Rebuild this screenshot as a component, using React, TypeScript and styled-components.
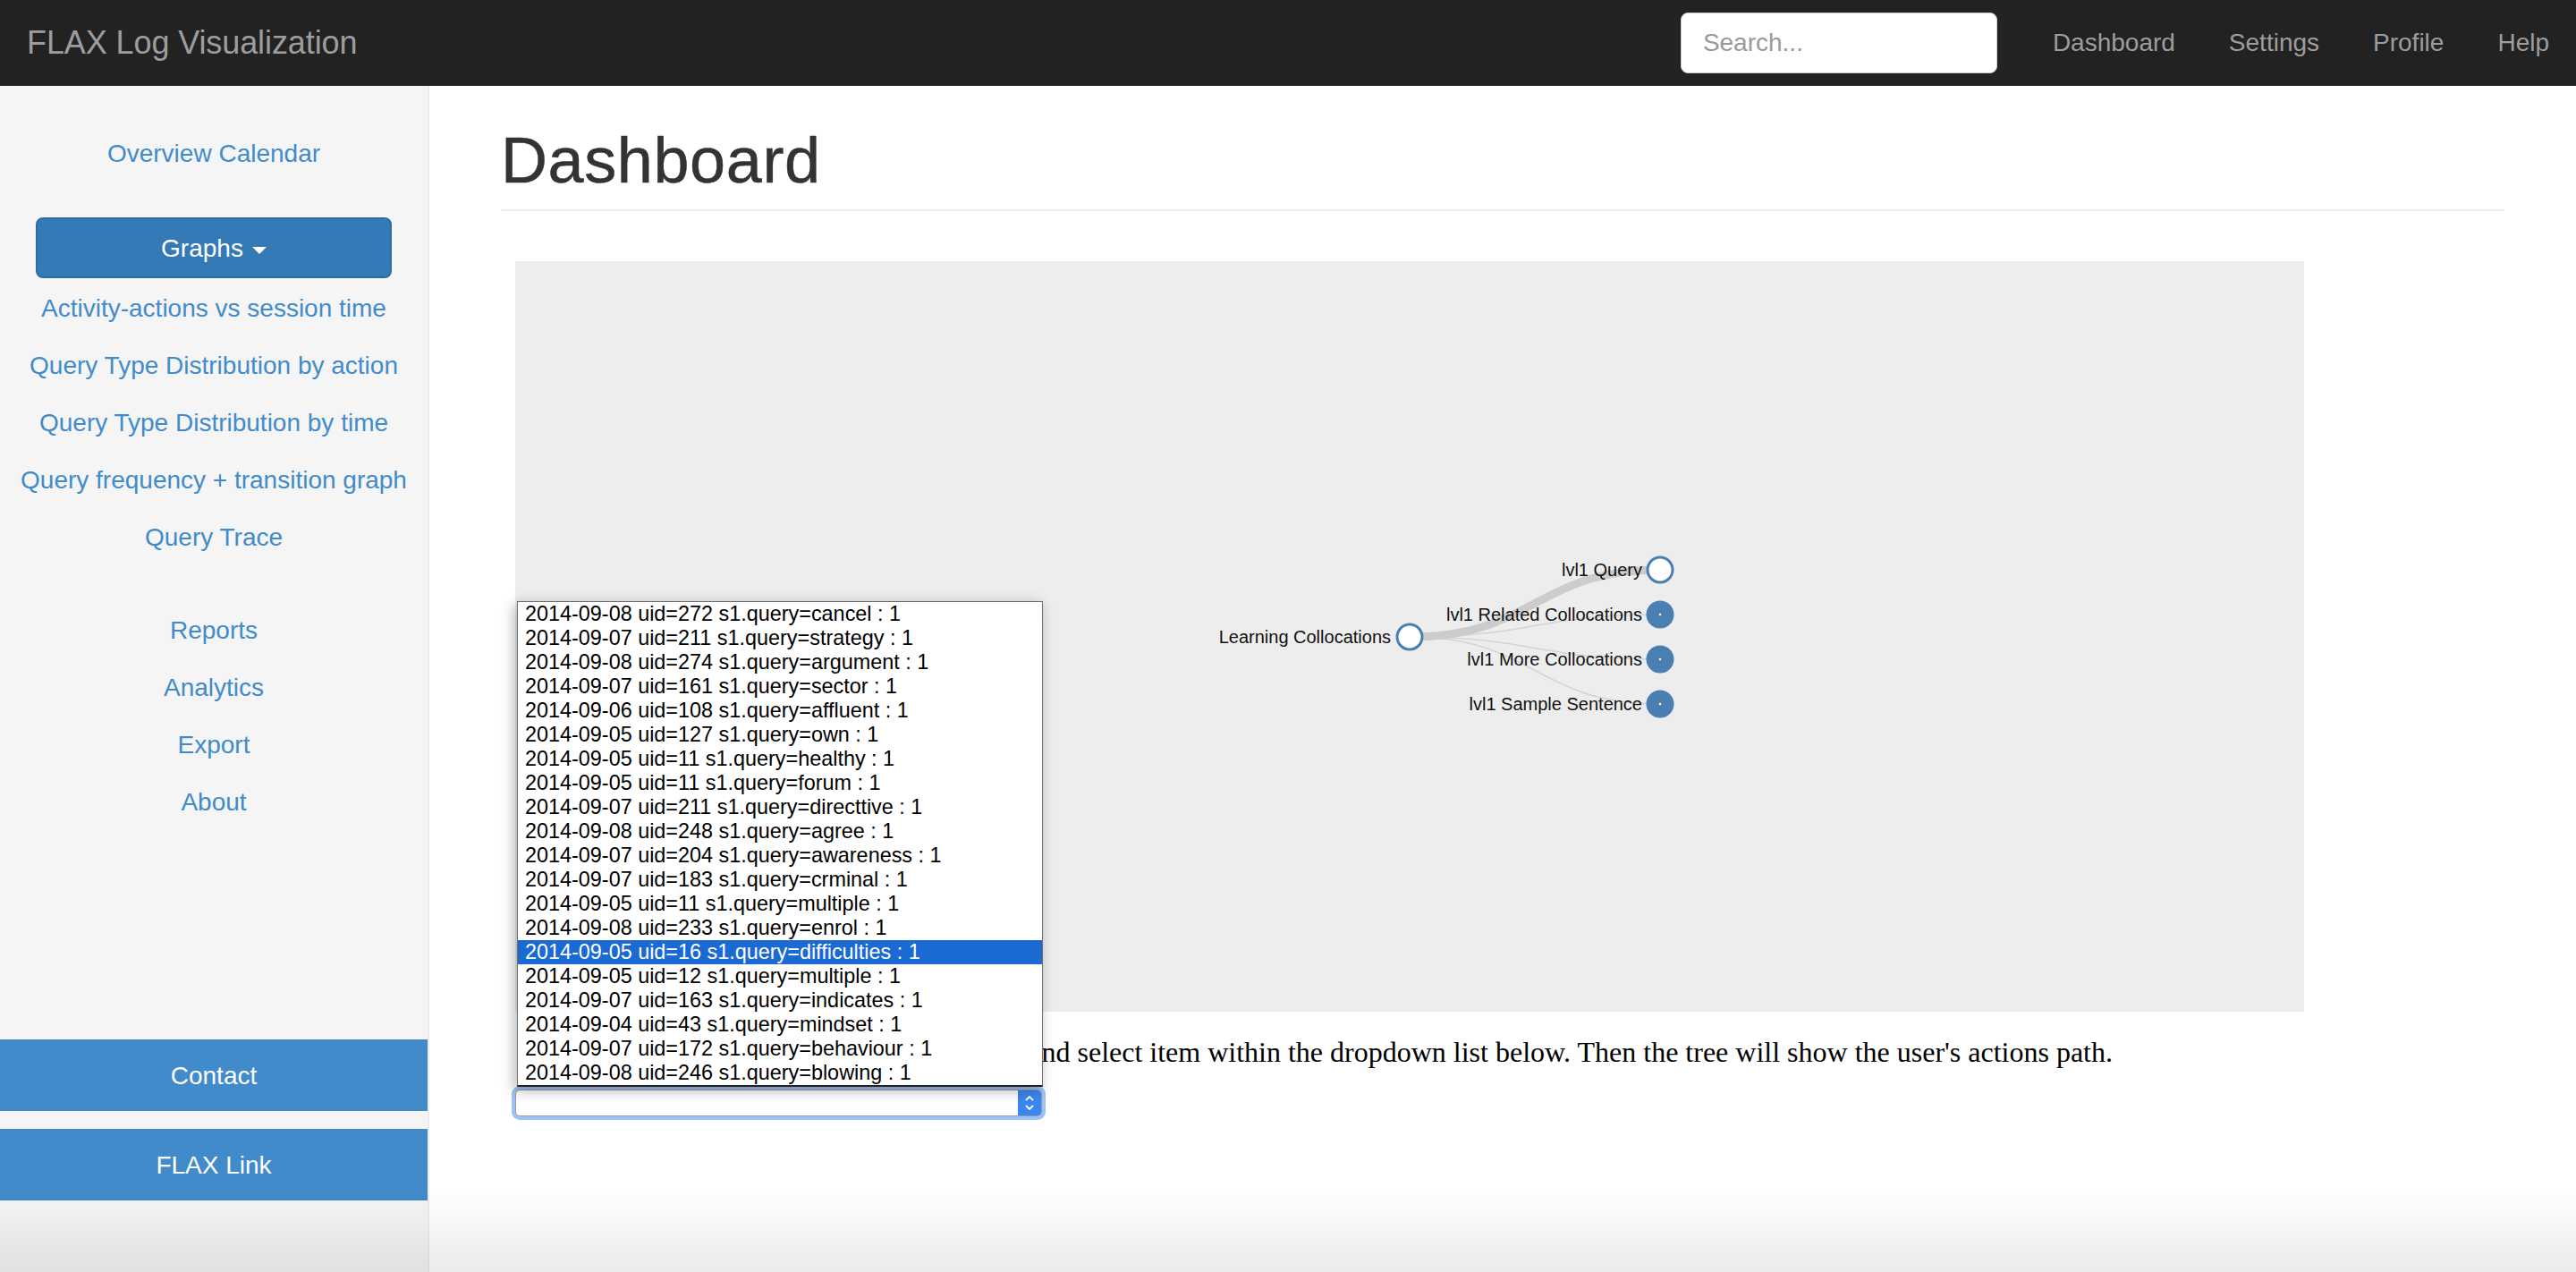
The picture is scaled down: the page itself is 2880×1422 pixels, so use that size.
import React from "react";
import styled, { createGlobalStyle } from "styled-components";

const GlobalStyle = createGlobalStyle`
  html, body { margin: 0; padding: 0; background: #fff; }
  body { font-family: "Liberation Sans", Arial, Helvetica, sans-serif; }
  * { box-sizing: border-box; }
`;

const Page = styled.div`
  min-height: 100vh;
  display: flex;
  flex-direction: column;
`;

const Navbar = styled.header`
  height: 96px;
  flex: 0 0 96px;
  background: #222;
  display: flex;
  align-items: center;
  padding-left: 30px;
`;

const Brand = styled.div`
  font-size: 36px;
  color: #9d9d9d;
  line-height: 1;
  letter-spacing: -0.1px;
`;

const NavRight = styled.nav`
  margin-left: auto;
  display: flex;
  align-items: center;
`;

const SearchInput = styled.input`
  width: 354px;
  height: 68px;
  border: 1px solid #ccc;
  border-radius: 8px;
  padding: 0 24px;
  font-family: "Liberation Sans", Arial, sans-serif;
  font-size: 28px;
  color: #555;
  margin-right: 32px;
  outline: none;
  &::placeholder { color: #999; }
`;

const NavLink = styled.a`
  font-size: 28px;
  color: #9d9d9d;
  padding: 0 30px;
  text-decoration: none;
  line-height: 96px;
`;

const Body = styled.div`
  flex: 1;
  display: flex;
`;

const Sidebar = styled.aside`
  width: 480px;
  flex: 0 0 480px;
  background: #f5f5f5;
  border-right: 2px solid #ebebeb;
  display: flex;
  flex-direction: column;
  padding-top: 44px;
  padding-bottom: 80px;
`;

const SideLink = styled.a<{ $gap?: number }>`
  display: block;
  height: 64px;
  line-height: 64px;
  text-align: center;
  font-size: 28px;
  color: #428bca;
  text-decoration: none;
  margin-top: ${(p) => p.$gap ?? 0}px;
`;

const GraphsButton = styled.button`
  margin: 39px 40px 2px;
  height: 68px;
  padding-top: 2px;
  background: #337ab7;
  border: 2px solid #2e6da4;
  border-radius: 8px;
  color: #fff;
  font-family: "Liberation Sans", Arial, sans-serif;
  font-size: 28px;
  display: flex;
  align-items: center;
  justify-content: center;
  gap: 10px;
`;

const Caret = styled.span`
  width: 0;
  height: 0;
  border-left: 8px solid transparent;
  border-right: 8px solid transparent;
  border-top: 8px solid #fff;
  margin-top: 4px;
`;

const BottomLinks = styled.div`
  margin-top: auto;
  display: flex;
  flex-direction: column;
  gap: 20px;
`;

const BlockLink = styled.a`
  display: block;
  height: 80px;
  line-height: 82px;
  text-align: center;
  background: #418bca;
  color: #fff;
  font-size: 28px;
  text-decoration: none;
`;

const Main = styled.main`
  flex: 1;
  padding: 0 80px;
`;

const Title = styled.h1`
  margin: 44px 0 0;
  font-size: 72px;
  font-weight: 500;
  line-height: 79px;
  letter-spacing: 0.6px;
  color: #333;
  -webkit-text-stroke: 0.5px #333;
  padding-bottom: 15px;
  border-bottom: 2px solid #eee;
`;

const GraphBox = styled.div`
  margin: 56px 0 0 16px;
  width: 2000px;
  height: 839px;
  background: #ededed;
`;

const TreeSvg = styled.svg`
  display: block;
`;

const NodeLabel = styled.text`
  font-family: "Liberation Sans", Arial, sans-serif;
  font-size: 20px;
  fill: #111;
`;

const Hint = styled.p`
  margin: 27px 0 0 22px;
  font-family: "Liberation Serif", "Times New Roman", serif;
  font-size: 32px;
  color: #000;
  line-height: normal;
`;

const SelectWrap = styled.div`
  position: relative;
  margin: 23px 0 0 16px;
  width: 589px;
  height: 30px;
`;

const SelectBox = styled.div`
  width: 100%;
  height: 100%;
  border: 1px solid #9a9a9a;
  border-radius: 5px;
  background: #fff;
  box-shadow: 0 0 0 4px #9dc2f5;
  display: flex;
  justify-content: flex-end;
  overflow: hidden;
`;

const Stepper = styled.div`
  width: 26px;
  height: 100%;
  background: #3a86f2;
  display: flex;
  align-items: center;
  justify-content: center;
`;

const DropList = styled.ul`
  position: absolute;
  left: 2px;
  bottom: calc(100% + 3px);
  width: 588px;
  margin: 0;
  padding: 0;
  list-style: none;
  background: #fff;
  border: 1px solid #6e6e6e;
  border-bottom: 2px solid #222;
  box-shadow: -3px 4px 14px rgba(0, 0, 0, 0.3);
`;

const DropItem = styled.li<{ $active?: boolean }>`
  height: 27px;
  line-height: 27px;
  padding-left: 8px;
  font-family: "Liberation Sans", Arial, sans-serif;
  font-size: 23.4px;
  white-space: nowrap;
  color: ${(p) => (p.$active ? "#fff" : "#000")};
  background: ${(p) => (p.$active ? "#1b69d3" : "transparent")};
`;

const WindowShade = styled.div`
  position: fixed;
  left: 0;
  right: 0;
  bottom: 0;
  height: 92px;
  pointer-events: none;
  background: linear-gradient(rgba(0, 0, 0, 0), rgba(0, 0, 0, 0.08));
`;

const items = [
  "2014-09-08 uid=272 s1.query=cancel : 1",
  "2014-09-07 uid=211 s1.query=strategy : 1",
  "2014-09-08 uid=274 s1.query=argument : 1",
  "2014-09-07 uid=161 s1.query=sector : 1",
  "2014-09-06 uid=108 s1.query=affluent : 1",
  "2014-09-05 uid=127 s1.query=own : 1",
  "2014-09-05 uid=11 s1.query=healthy : 1",
  "2014-09-05 uid=11 s1.query=forum : 1",
  "2014-09-07 uid=211 s1.query=directtive : 1",
  "2014-09-08 uid=248 s1.query=agree : 1",
  "2014-09-07 uid=204 s1.query=awareness : 1",
  "2014-09-07 uid=183 s1.query=crminal : 1",
  "2014-09-05 uid=11 s1.query=multiple : 1",
  "2014-09-08 uid=233 s1.query=enrol : 1",
  "2014-09-05 uid=16 s1.query=difficulties : 1",
  "2014-09-05 uid=12 s1.query=multiple : 1",
  "2014-09-07 uid=163 s1.query=indicates : 1",
  "2014-09-04 uid=43 s1.query=mindset : 1",
  "2014-09-07 uid=172 s1.query=behaviour : 1",
  "2014-09-08 uid=246 s1.query=blowing : 1",
];

const root = { x: 1000, y: 420, label: "Learning Collocations" };
const children = [
  { y: 345, label: "lvl1 Query", open: true, thick: true },
  { y: 395, label: "lvl1 Related Collocations", open: false, thick: false },
  { y: 445, label: "lvl1 More Collocations", open: false, thick: false },
  { y: 495, label: "lvl1 Sample Sentence", open: false, thick: false },
];
const childX = 1280;

function Tree() {
  const mx = (root.x + childX) / 2;
  return (
    <TreeSvg width={2000} height={839} viewBox="0 0 2000 839">
      {children
        .slice()
        .reverse()
        .map((c) => (
          <path
            key={c.label + "-link"}
            d={`M${root.x},${root.y} C${mx},${root.y} ${mx},${c.y} ${childX},${c.y}`}
            fill="none"
            stroke={c.thick ? "#cccccc" : "#d4d4d4"}
            strokeWidth={c.thick ? 9 : 1.5}
          />
        ))}
      <circle cx={root.x} cy={root.y} r={14} fill="#fff" stroke="#4a7fb4" strokeWidth={3} />
      <NodeLabel x={root.x - 21} y={root.y} dy="0.35em" textAnchor="end">
        {root.label}
      </NodeLabel>
      {children.map((c) => (
        <g key={c.label}>
          <circle
            cx={childX}
            cy={c.y}
            r={14}
            fill={c.open ? "#fff" : "#4a7fb4"}
            stroke="#4a7fb4"
            strokeWidth={3}
          />
          {!c.open && <circle cx={childX} cy={c.y} r={1.3} fill="#fff" />}
          <NodeLabel x={childX - 20} y={c.y} dy="0.35em" textAnchor="end">
            {c.label}
          </NodeLabel>
        </g>
      ))}
    </TreeSvg>
  );
}

export default function App() {
  return (
    <Page>
      <GlobalStyle />
      <Navbar>
        <Brand>FLAX Log Visualization</Brand>
        <NavRight>
          <SearchInput placeholder="Search..." />
          <NavLink>Dashboard</NavLink>
          <NavLink>Settings</NavLink>
          <NavLink>Profile</NavLink>
          <NavLink>Help</NavLink>
        </NavRight>
      </Navbar>
      <Body>
        <Sidebar>
          <SideLink>Overview Calendar</SideLink>
          <GraphsButton>
            Graphs <Caret />
          </GraphsButton>
          <SideLink>Activity-actions vs session time</SideLink>
          <SideLink>Query Type Distribution by action</SideLink>
          <SideLink>Query Type Distribution by time</SideLink>
          <SideLink>Query frequency + transition graph</SideLink>
          <SideLink>Query Trace</SideLink>
          <SideLink $gap={40}>Reports</SideLink>
          <SideLink>Analytics</SideLink>
          <SideLink>Export</SideLink>
          <SideLink>About</SideLink>
          <BottomLinks>
            <BlockLink>Contact</BlockLink>
            <BlockLink>FLAX Link</BlockLink>
          </BottomLinks>
        </Sidebar>
        <Main>
          <Title>Dashboard</Title>
          <GraphBox>
            <Tree />
          </GraphBox>
          <Hint>
            To see the path please click in the input box and select item within the dropdown list below. Then the
            tree will show the user's actions path.
          </Hint>
          <SelectWrap>
            <SelectBox>
              <Stepper>
                <svg width="14" height="24" viewBox="0 0 14 24">
                  <path d="M3 9 L7 5 L11 9" fill="none" stroke="#fff" strokeWidth="1.8" />
                  <path d="M3 15 L7 19 L11 15" fill="none" stroke="#fff" strokeWidth="1.8" />
                </svg>
              </Stepper>
            </SelectBox>
            <DropList>
              {items.map((t, i) => (
                <DropItem key={i} $active={i === 14}>
                  {t}
                </DropItem>
              ))}
            </DropList>
          </SelectWrap>
        </Main>
      </Body>
      <WindowShade />
    </Page>
  );
}
